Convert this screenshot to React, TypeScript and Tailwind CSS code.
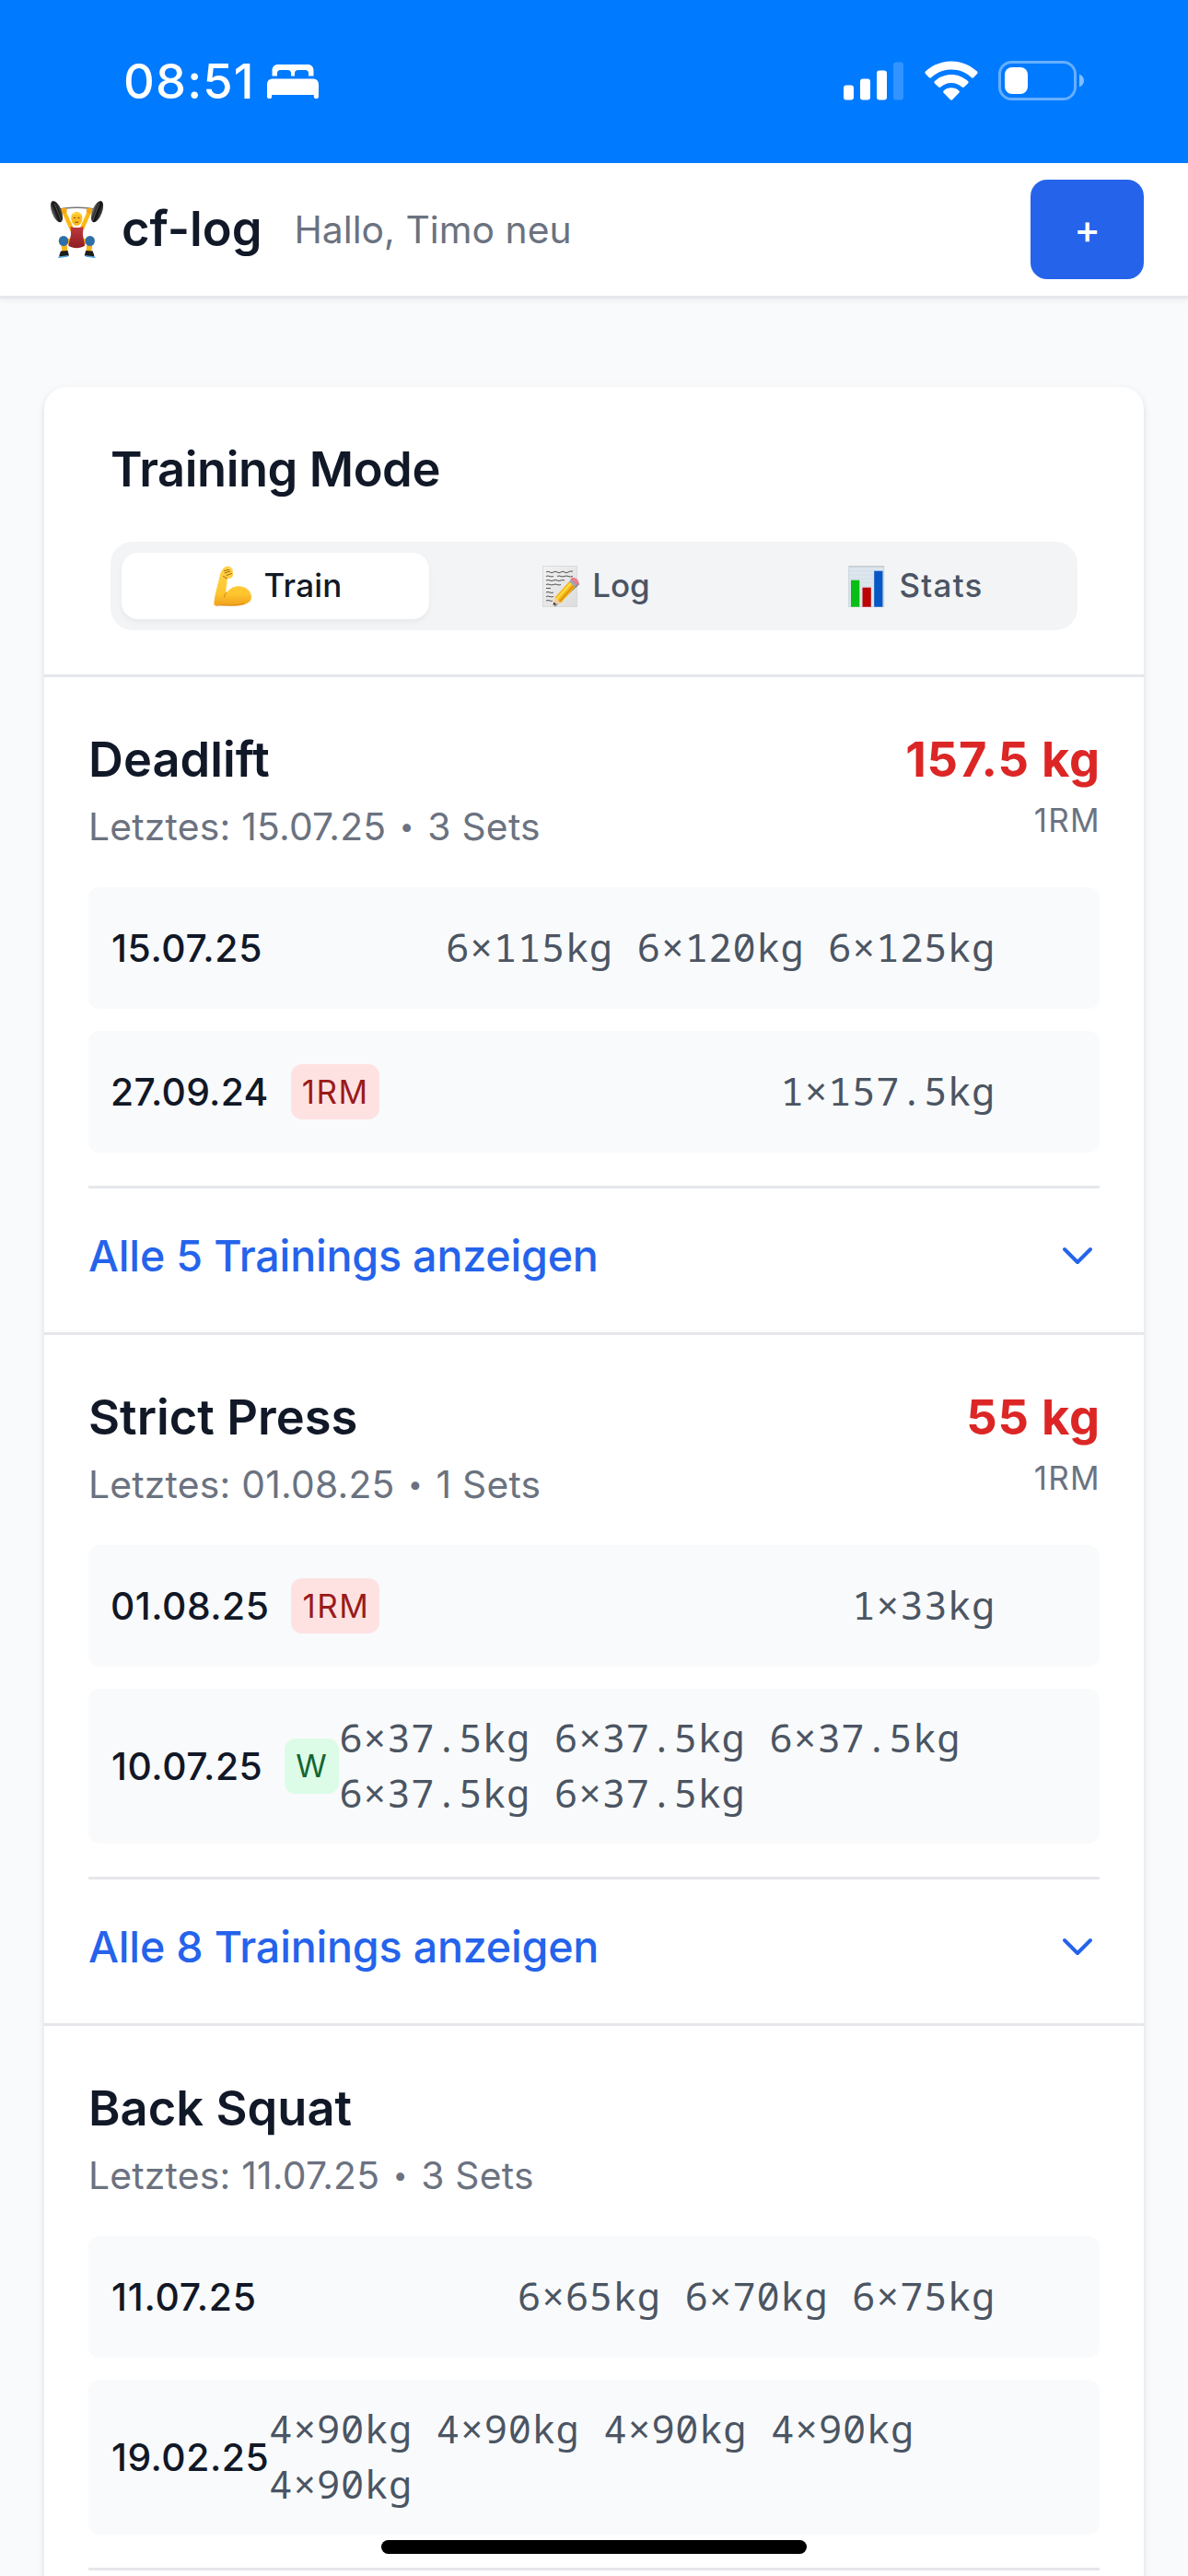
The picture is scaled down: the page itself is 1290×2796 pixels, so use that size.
import React from "react";

type Workout = {
  date: string;
  tracking: string;
  sets: string[];
  badge?: "1RM" | "W";
};

type Exercise = {
  name: string;
  last: string;
  setCount: number;
  max?: string;
  workouts: Workout[];
  total?: number;
};

const exercises: Exercise[] = [
  {
    name: "Deadlift",
    last: "15.07.25",
    setCount: 3,
    max: "157.5 kg",
    total: 5,
    workouts: [
      { date: "15.07.25", tracking: "pl-px -mr-px tracking-[0.64px]", sets: ["6×115kg", "6×120kg", "6×125kg"] },
      { date: "27.09.24", tracking: "tracking-[0.3px]", sets: ["1×157.5kg"], badge: "1RM" },
    ],
  },
  {
    name: "Strict Press",
    last: "01.08.25",
    setCount: 1,
    max: "55 kg",
    total: 8,
    workouts: [
      { date: "01.08.25", tracking: "tracking-[0.5px]", sets: ["1×33kg"], badge: "1RM" },
      {
        date: "10.07.25",
        tracking: "pl-px tracking-[0.56px]",
        sets: ["6×37.5kg", "6×37.5kg", "6×37.5kg", "6×37.5kg", "6×37.5kg"],
        badge: "W",
      },
    ],
  },
  {
    name: "Back Squat",
    last: "11.07.25",
    setCount: 3,
    workouts: [
      { date: "11.07.25", tracking: "pl-px -mr-px tracking-[0.77px]", sets: ["6×65kg", "6×70kg", "6×75kg"] },
      {
        date: "19.02.25",
        tracking: "pl-px tracking-[0.52px]",
        sets: ["4×90kg", "4×90kg", "4×90kg", "4×90kg", "4×90kg"],
      },
    ],
  },
];

function BedIcon() {
  return (
    <svg className="h-[39px] w-[56px]" viewBox="0 0 56 39" fill="#fff">
      <path d="M5.5 13.5V7.5C5.5 3.5 8 1 12 1h32c4 0 6.500 2.500 6.500 6.500v6h-5.500v-3c0-2.200-1.300-3.500-3.500-3.500h-8c-2.200 0-3.500 1.300-3.500 3.500v3h-4v-3c0-2.200-1.300-3.500-3.500-3.500h-8c-2.200 0-3.500 1.300-3.500 3.500v3z" />
      <path d="M0 23c0-4.500 2.500-6.500 6.500-6.500h43c4 0 6.500 2 6.500 6.500v12.500a2.600 2.600 0 0 1-5.200 0V34H5.200v1.500a2.600 2.600 0 0 1-5.200 0z" />
    </svg>
  );
}

function SignalIcon() {
  return (
    <svg className="h-[42px] w-[65px]" viewBox="0 0 65 42" fill="#fff">
      <rect x="0" y="25.500" width="11" height="16" rx="3" />
      <rect x="18" y="18.500" width="11" height="23" rx="3" />
      <rect x="36" y="9.500" width="11" height="32" rx="3" />
      <rect x="54" y="0.500" width="11" height="41" rx="3" opacity="0.2" />
    </svg>
  );
}

function WifiIcon() {
  return (
    <svg className="h-[43px] w-[58px]" viewBox="0 0 58 43" fill="#fff">
      <path d="M29 0.500C39.800 0.500 49.500 4.700 57 11.600c.8.700.8 1.700.1 2.400l-4 4.200c-.6.600-1.500.600-2.200 0C45.200 12.900 37.700 9.500 29 9.500S12.800 12.900 7.100 18.200c-.7.600-1.600.6-2.200 0l-4-4.200c-.7-.7-.7-1.700.1-2.400C8.500 4.700 18.200.5 29 .5z" />
      <path d="M29 15c7 0 13.200 2.700 18 7.100.8.700.8 1.700.1 2.400l-4.200 4.100c-.6.600-1.500.6-2.200 0C37.500 25.800 33.500 24 29 24s-8.500 1.800-11.700 4.600c-.7.600-1.600.6-2.200 0l-4.200-4.100c-.7-.7-.7-1.700.1-2.400C15.800 17.700 22 15 29 15z" />
      <path d="M29 29.200c3.200 0 6.100 1.200 8.300 3.200.7.700.7 1.600 0 2.300l-7 7.300c-.8.800-1.800.8-2.600 0l-7-7.300c-.7-.7-.7-1.600 0-2.300 2.200-2 5.100-3.200 8.300-3.200z" />
    </svg>
  );
}

function BatteryIcon() {
  return (
    <svg className="h-[43px] w-[94px]" viewBox="0 0 94 43">
      <rect x="1.500" y="1.500" width="82" height="40" rx="13" fill="none" stroke="#fff" strokeWidth="3" opacity="0.4" />
      <path d="M88 14.500c3.300 1.300 5 4 5 7s-1.700 5.700-5 7z" fill="#fff" opacity="0.5" />
      <rect x="7" y="7" width="25" height="29" rx="8" fill="#fff" />
    </svg>
  );
}

function LifterIcon() {
  return (
    <svg className="h-[70px] w-[70px]" viewBox="48 214 70 70">
      <defs>
        <linearGradient id="plate" x1="0" y1="0" x2="1" y2="0">
          <stop offset="0" stopColor="#777" />
          <stop offset="0.350" stopColor="#222" />
          <stop offset="0.600" stopColor="#111" />
          <stop offset="1" stopColor="#4a4a4a" />
        </linearGradient>
        <linearGradient id="suit" x1="0" y1="0" x2="0" y2="1">
          <stop offset="0" stopColor="#c23a40" />
          <stop offset="1" stopColor="#8e1c22" />
        </linearGradient>
      </defs>
      <path d="M62 228C72 224.300 95 224.300 105 228" fill="none" stroke="#777" strokeWidth="1.400" />
      <path d="M69.500 230L78 249M97 230L88.600 249" stroke="#fdb813" strokeWidth="4.400" strokeLinecap="round" />
      <circle cx="69.500" cy="228.800" r="3.200" fill="#f5a712" />
      <circle cx="97" cy="228.800" r="3.200" fill="#f5a712" />
      <path d="M78 262L69 262L70.500 273M88.500 262L97.500 262L96.500 273" fill="none" stroke="#fbb31a" strokeWidth="6" strokeLinejoin="round" />
      <path d="M76.500 245.500c2 2 12 2 14 0l-.6 9 1.300 7 1 5c-5 3.500-13 3.500-18 0l1.200-5 1.700-7z" fill="url(#suit)" />
      <ellipse cx="83.300" cy="237.500" rx="6" ry="7.600" fill="#fdbb22" />
      <path d="M77.300 235c0-6 12-6 12 0-2-2.500-10-2.500-12 0z" fill="#ffd33c" />
      <path d="M80 236.500h2M84.500 236.500h2M81.500 241.500q1.800-1 3.600 0" stroke="#7a4a10" strokeWidth="1.100" fill="none" />
      <ellipse cx="69" cy="261.500" rx="5.200" ry="5.600" fill="#2f6fa8" />
      <ellipse cx="97.700" cy="261.500" rx="5.200" ry="5.600" fill="#2f6fa8" />
      <path d="M66 272.500l7.500-.5 1.500 5.500-10 1.500c-1.500-1 0-3 1-6.500z" fill="#1d1d1f" />
      <path d="M100.700 272.500l-7.500-.5-1.500 5.500 10 1.500c1.500-1 0-3-1-6.500z" fill="#1d1d1f" />
      <path d="M64 279.300l9-1.300M102.700 279.300l-9-1.300" stroke="#4ea3e0" strokeWidth="1.600" strokeLinecap="round" />
      <ellipse cx="61.500" cy="229.700" rx="5.300" ry="12.200" transform="rotate(-21 61.500 229.700)" fill="url(#plate)" />
      <ellipse cx="105.500" cy="229.700" rx="5.300" ry="12.200" transform="rotate(21 105.500 229.700)" fill="url(#plate)" />
      <path d="M59 220.500l7.500 19M108 220.500l-7.500 19" stroke="#666" strokeWidth="0.800" />
    </svg>
  );
}

function MuscleIcon() {
  return (
    <svg className="h-[45px] w-[45px]" viewBox="0 0 45 45">
      <defs>
        <linearGradient id="skin" x1="0" y1="0" x2="0" y2="1">
          <stop offset="0" stopColor="#ffd348" />
          <stop offset="0.700" stopColor="#fec52e" />
          <stop offset="1" stopColor="#f0a01c" />
        </linearGradient>
      </defs>
      <path
        d="M3.500 43C3 34 7.500 22 9.500 11.500 10.500 6 14 .5 18.500.5c4 .8 6 3.500 5.200 6.500.8 3.500 0 6.500-3.200 6.800l-3 .2c.7 5.500-1.800 10-.8 15.500C20 25 25 22.300 30 22.300c8 0 14 5.500 14 12 0 7-10 9.300-18 9.300-9 0-16-1.500-22.500-.6z"
        fill="url(#skin)"
      />
      <path d="M14.500 5.500l5-1M15 8l6-2M17 10.500l5.500-2M17.500 14l-4-2.500" stroke="#9a5a08" strokeWidth="0.900" fill="none" strokeLinecap="round" />
      <path d="M16.700 29.500c-1.200 1.500-2 3-2.200 4.500" stroke="#d98a12" strokeWidth="1.100" fill="none" strokeLinecap="round" />
      <path d="M5 43.300c8-1 22 1.200 31-2.300" stroke="#d98512" strokeWidth="0.900" fill="none" />
    </svg>
  );
}

function MemoIcon() {
  return (
    <svg className="h-[45px] w-[45px]" viewBox="0 0 45 45">
      <defs>
        <linearGradient id="paper" x1="0" y1="0" x2="1" y2="1">
          <stop offset="0" stopColor="#f2f2f2" />
          <stop offset="1" stopColor="#dcdcdc" />
        </linearGradient>
      </defs>
      <rect x="4.500" y="0.300" width="37" height="44.500" fill="url(#paper)" stroke="#cfcfcf" strokeWidth="0.600" />
      <path
        d="M8 7q2-1.500 4 0t4 0 4 0 4 0 4 0 4 0 5-.8M8 11.500q2-1 4 0t4 0M20 11.500q2-1 4 0t4 0 4 0 5 0M8 16q2-1 4 0t4 0 4 0 4 0 4 0M8 20.500q2-1 4 0t4 0 4 0 4 0M8 24.500h5M8 29q2-1 4 0t4 0M8 33.500q2-1 4 0t4 0M8 38q2-1 4 0t3 0"
        fill="none"
        stroke="#555"
        strokeWidth="1"
      />
      <path d="M17 43.500L43.500 19" stroke="#000" strokeOpacity="0.450" strokeWidth="2.500" />
      <path d="M17.500 34.500L33 17.200l6.500 6L24 40.500z" fill="#f5b716" />
      <path d="M19.500 36.300L35 19" stroke="#ffdc4a" strokeWidth="2" />
      <path d="M22.500 39L38 21.800" stroke="#d88f0a" strokeWidth="1.500" />
      <path d="M17.500 34.500L24 40.500 15.500 42.800z" fill="#f0cf9c" />
      <path d="M15.500 42.800l.9-3.300 2.500 2.300z" fill="#333" />
      <path d="M33 17.200l2.500-2.700 6.500 6-2.500 2.700z" fill="#9aa6b4" />
      <path d="M35.500 14.500c2.500-3 9.500 2.500 6.500 6z" fill="#f08a96" stroke="#e77785" strokeWidth="1.500" />
    </svg>
  );
}

function ChartIcon() {
  return (
    <svg className="h-[45px] w-[45px]" viewBox="0 0 45 45">
      <rect x="3.800" y="0.400" width="38" height="44.300" fill="#dde6ee" stroke="#c3cbd2" strokeWidth="0.800" />
      <path d="M4 1h38" stroke="#c8ccd0" strokeWidth="1.400" />
      <path d="M4.500 6h37M4.500 10h37M4.500 14h37M4.500 18h37M4.500 22h37M4.500 26h37M4.500 30h37M4.500 34h37M4.500 38h37" stroke="#cfdae3" strokeWidth="0.700" />
      <rect x="6" y="15.700" width="9.300" height="29" fill="#08be14" />
      <rect x="18.500" y="23.700" width="9.300" height="21" fill="#bd0404" />
      <rect x="31.200" y="5.700" width="9.300" height="39" fill="#0758c4" />
    </svg>
  );
}

function Badge({ kind }: { kind: "1RM" | "W" }) {
  return kind === "1RM" ? (
    <span className="flex h-[60px] w-[96px] items-center justify-center rounded-xl bg-[#fee2e2] pl-px text-[35px] leading-[48px] tracking-[1.500px] text-[#991b1b]">
      1RM
    </span>
  ) : (
    <span className="flex h-[60px] w-[59px] items-center justify-center rounded-xl bg-[#dcfce7] pr-0.5 text-[34px] leading-[48px] text-[#166534]">
      W
    </span>
  );
}

function WorkoutRow({ workout }: { workout: Workout }) {
  const height = workout.sets.length > 3 ? "h-[168px]" : "h-[132px]";
  return (
    <div className={`flex items-center justify-between rounded-xl bg-[#f9fafb] px-6 ${height}`}>
      <div className="flex shrink-0 items-center gap-6">
        <span className={`text-[40.8px] leading-[60px] font-medium text-[#111827] ${workout.tracking}`}>
          {workout.date}
        </span>
        {workout.badge && <Badge kind={workout.badge} />}
      </div>
      <div className="-mt-0.5 mr-[89px] font-['Noto_Sans_Mono','DejaVu_Sans_Mono',monospace] text-[42px] leading-[60px] tracking-[0.750px] text-[#4b5563]">
        {workout.sets.join(" ")}
      </div>
    </div>
  );
}

function ExerciseSection({ exercise }: { exercise: Exercise }) {
  return (
    <section className="border-t-3 border-[#e5e7eb] p-12">
      <div className="mb-9 flex h-36 items-start justify-between">
        <div>
          <h3 className="h-[84px] text-[52.4px] leading-[82px] font-semibold tracking-[0.050px] text-[#111827]">
            {exercise.name}
          </h3>
          <p className="flex h-[60px] items-center text-[40.8px] leading-[60px] tracking-[0.22px] text-[#6b7280]">
            Letztes: {exercise.last}
            <span className="w-[45px] text-center text-[28px]">•</span>
            {exercise.setCount} Sets
          </p>
        </div>
        {exercise.max && (
          <div className="text-right">
            <p className="-mr-px h-[84px] text-[52.4px] leading-[82px] font-bold tracking-[0.8px] text-[#dc2626]">
              {exercise.max}
            </p>
            <p className="-mr-px text-[35px] leading-[47px] tracking-[1.300px] text-[#6b7280]">1RM</p>
          </div>
        )}
      </div>
      <div className="flex flex-col gap-6">
        {exercise.workouts.map((workout) => (
          <WorkoutRow key={workout.date} workout={workout} />
        ))}
      </div>
      <div className="mt-9 border-t-3 border-[#e5e7eb] pt-9">
        {exercise.total && (
          <button className="flex h-[72px] w-full items-center justify-between text-[46.600px] leading-[72px] font-medium tracking-[-0.2px] text-[#2563eb]">
            <span className="pt-0.5">Alle {exercise.total} Trainings anzeigen</span>
            <svg className="h-12 w-12" viewBox="0 0 24 24" fill="none" stroke="currentColor" strokeWidth="2" strokeLinecap="round" strokeLinejoin="round">
              <path d="M19 9l-7 7-7-7" />
            </svg>
          </button>
        )}
      </div>
    </section>
  );
}

export default function App() {
  return (
    <div className="relative h-[2796px] w-[1290px] overflow-hidden bg-[#f9fafb] font-['Inter','Liberation_Sans',sans-serif]">
      <div className="flex h-[177px] items-center justify-between bg-[#007aff] pr-[112px] pl-[134px]">
        <div className="flex items-center">
          <span className="w-[156px] text-[52.400px] leading-none font-medium tracking-[1.200px] text-white">08:51</span>
          <BedIcon />
        </div>
        <div className="flex items-center pb-0.5">
          <SignalIcon />
          <div className="ml-[23px]">
            <WifiIcon />
          </div>
          <div className="ml-[22px]">
            <BatteryIcon />
          </div>
        </div>
      </div>

      <header className="flex h-[147px] items-center justify-between border-b-3 border-[#e5e7eb] bg-white px-12 shadow-[0_3px_6px_rgba(0,0,0,0.05)]">
        <div className="flex items-center">
          <LifterIcon />
          <h1 className="ml-3.5 pb-0.5 text-[52.400px] leading-[82px] font-semibold text-[#111827]">cf-log</h1>
          <span className="ml-[35px] text-[40.800px] leading-[60px] tracking-[0.050px] text-[#6b7280]">Hallo, Timo neu</span>
        </div>
        <button className="flex h-[108px] w-[123px] items-center justify-center rounded-[18px] bg-[#2563eb] pb-0.5 text-[43px] leading-[60px] font-medium text-white">
          +
        </button>
      </header>

      <main className="px-12 pt-24">
        <div className="rounded-3xl bg-white shadow-[0_3px_9px_rgba(0,0,0,0.1),0_3px_6px_-3px_rgba(0,0,0,0.1)]">
          <div className="px-[72px] py-12">
            <h2 className="mb-9 h-[84px] text-[52.400px] leading-[82px] font-semibold tracking-[-0.42px] text-[#111827]">
              Training Mode
            </h2>
            <div className="grid h-24 grid-cols-3 gap-3 rounded-3xl bg-[#f3f4f6] p-3 text-[35px] leading-[48px] font-medium text-[#4b5563]">
              <button className="flex items-center justify-center gap-[13px] rounded-[18px] bg-white pl-0.5 tracking-[0.2px] text-[#111827] shadow-[0_3px_6px_rgba(0,0,0,0.05)]">
                <MuscleIcon />
                <span className="pb-0.5">Train</span>
              </button>
              <button className="flex items-center justify-center gap-[13px] pl-px">
                <MemoIcon />
                <span className="pb-0.5">Log</span>
              </button>
              <button className="flex items-center justify-center gap-[13px] pl-1 tracking-[1.200px]">
                <ChartIcon />
                <span className="pb-0.5">Stats</span>
              </button>
            </div>
          </div>
          {exercises.map((exercise) => (
            <ExerciseSection key={exercise.name} exercise={exercise} />
          ))}
        </div>
      </main>

      <div className="absolute bottom-6 left-[414px] h-[15px] w-[462px] rounded-full bg-black" />
    </div>
  );
}
